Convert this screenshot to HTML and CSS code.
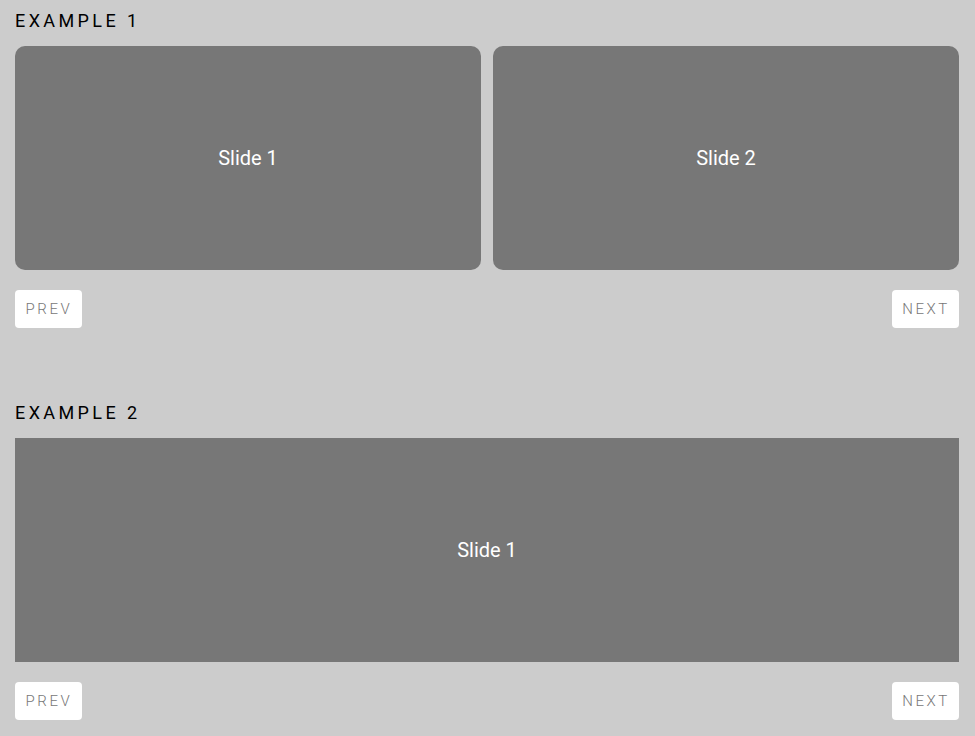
FILE: index.html
```html
<!DOCTYPE html>
<html lang="en">
<head>
    <meta charset="UTF-8">
    <meta name="viewport" content="width=device-width, initial-scale=1.0">
    <title>Slider Examples</title>
    <link rel="stylesheet" href="styles.css">
</head>
<body>
    <section class="example">
        <h2>Example 1</h2>
        <div class="slider slider-cards">
            <div class="slide">Slide 1</div>
            <div class="slide">Slide 2</div>
        </div>
        <div class="controls">
            <button class="btn">Prev</button>
            <button class="btn">Next</button>
        </div>
    </section>

    <section class="example">
        <h2>Example 2</h2>
        <div class="slider slider-full">
            <div class="slide">Slide 1</div>
        </div>
        <div class="controls">
            <button class="btn">Prev</button>
            <button class="btn">Next</button>
        </div>
    </section>
</body>
</html>
```

FILE: styles.css
```css
body {
    font-family: Roboto, 'Liberation Sans', sans-serif;
    background-color: #cccccc;
    margin: 0;
    padding: 10px 16px 0 15px;
    overflow: hidden;
}
.example {
    margin-bottom: 74px;
}
.example:last-child {
    margin-bottom: 0;
}
h2 {
    margin: 0 0 15px;
    font-size: 18px;
    line-height: 21px;
    font-weight: 400;
    letter-spacing: 3.4px;
    text-transform: uppercase;
    color: #000000;
}
.slider {
    display: flex;
    gap: 12px;
}
.slide {
    flex: 1;
    height: 224px;
    background-color: #777777;
    color: #ffffff;
    font-size: 20px;
    display: flex;
    justify-content: center;
    align-items: center;
}
.slider-cards .slide {
    border-radius: 10px;
}
.controls {
    display: flex;
    justify-content: space-between;
    margin-top: 20px;
}
.btn {
    font-family: Roboto, 'Liberation Sans', sans-serif;
    height: 38px;
    width: 67px;
    padding: 0;
    border: none;
    border-radius: 4px;
    background-color: #ffffff;
    color: #777777;
    font-size: 15px;
    font-weight: 300;
    letter-spacing: 2.6px;
    text-indent: 1px;
    text-transform: uppercase;
    cursor: pointer;
}
```
